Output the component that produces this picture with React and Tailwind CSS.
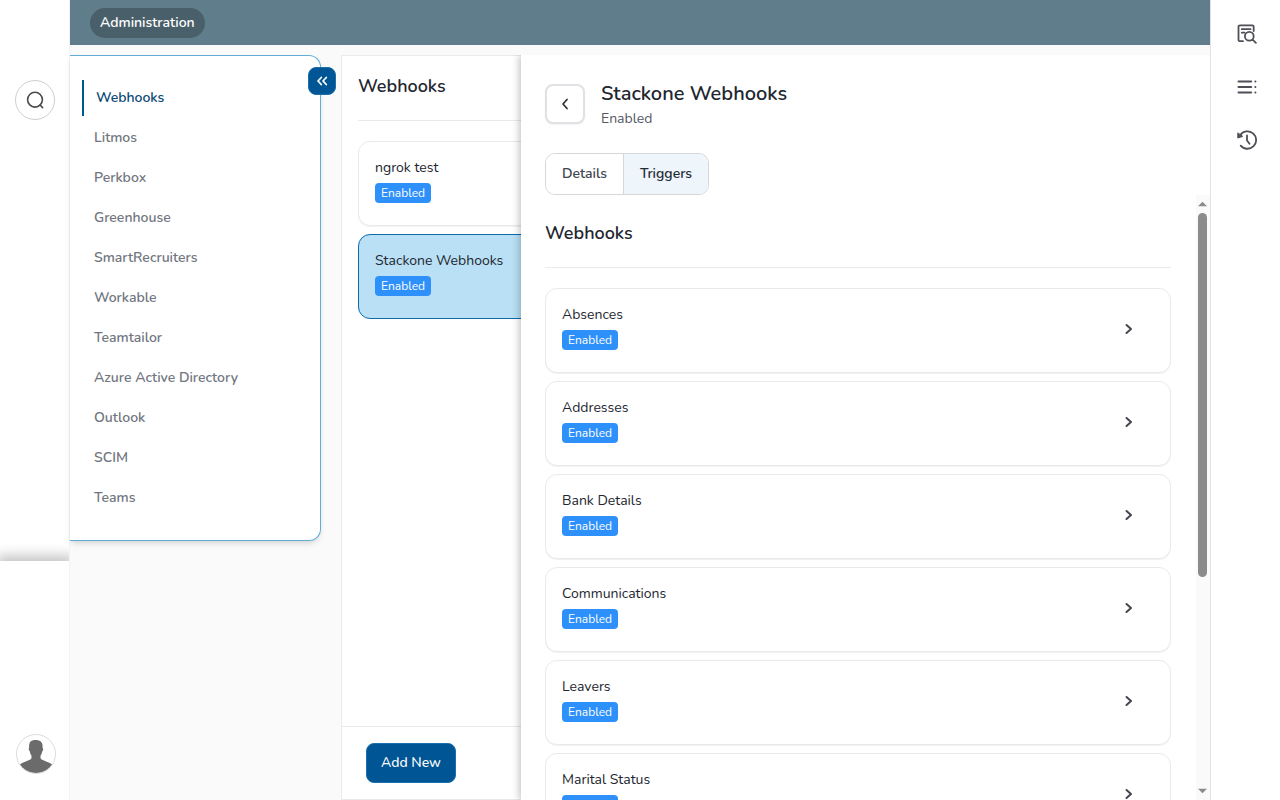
import React, { useState } from "react";

const menuItems = [
  "Webhooks",
  "Litmos",
  "Perkbox",
  "Greenhouse",
  "SmartRecruiters",
  "Workable",
  "Teamtailor",
  "Azure Active Directory",
  "Outlook",
  "SCIM",
  "Teams",
];

const hooks = ["ngrok test", "Stackone Webhooks"];

const triggers = [
  "Absences",
  "Addresses",
  "Bank Details",
  "Communications",
  "Leavers",
  "Marital Status",
];

const Badge = () => (
  <span className="inline-block h-5 rounded bg-[#2e90fa] px-1.5 text-xs leading-5 text-white">
    Enabled
  </span>
);

const SearchIcon = () => (
  <svg width="20" height="20" viewBox="0 0 20 20" fill="none" stroke="#4b4b4f" strokeWidth="1.6" strokeLinecap="round">
    <circle cx="10" cy="9.7" r="7.4" />
    <path d="M15 15l2.600 2.600" />
  </svg>
);

const Avatar = () => (
  <svg width="40" height="40" viewBox="0 0 40 40">
    <defs>
      <clipPath id="avatarClip">
        <circle cx="20" cy="20" r="19" />
      </clipPath>
    </defs>
    <circle cx="20" cy="20" r="19.5" fill="#fff" stroke="#dcdcdc" />
    <path
      clipPath="url(#avatarClip)"
      fill="#6b6b6b"
      d="M13.200 13.500C12.600 8.500 15 6 19 6c5 0 8.200 1.800 7.500 7.800.9.300.8 2.800-.3 3.700-.3 2-1 3.300-1.700 4.300v2.200c0 2 7.500 3.600 11.500 6.300V40H4v-9.700c4-2.700 11.500-4.300 11.500-6.300v-2.200c-.9-1-1.400-2.500-1.600-4.200-1.200-.9-1.500-3.500-.7-4.100z"
    />
  </svg>
);

// document with a magnifier on its lower right corner
const AuditIcon = () => (
  <svg width="20" height="20" viewBox="0 0 20 20" fill="none" stroke="#4f4f57" strokeWidth="1.800" strokeLinecap="round" strokeLinejoin="round">
    <path d="M6 17.200H3a1.500 1.500 0 0 1-1.500-1.500V2.800A1.500 1.500 0 0 1 3 1.300h12.200a1.500 1.500 0 0 1 1.500 1.500V7" />
    <path d="M4.800 5.200h8.700M4.800 8.700h2.700" />
    <circle cx="12.300" cy="12.300" r="4.400" />
    <path d="M15.600 15.600l3.300 3.200" />
  </svg>
);

const ListIcon = () => (
  <svg width="20" height="20" viewBox="0 0 20 20" fill="none" stroke="#4f4f57" strokeWidth="2" strokeLinecap="round">
    <path d="M1.500 4.500h12.700M1.500 10h12.700M1.500 15.500h12.700M18.300 4.500h.1M18.300 10h.1M18.300 15.500h.1" />
  </svg>
);

const HistoryIcon = () => (
  <svg width="20" height="20" viewBox="0 0 20 20" fill="none" stroke="#4f4f57" strokeWidth="1.800" strokeLinecap="round" strokeLinejoin="round">
    <path d="M3.200 5.200A8.700 8.700 0 1 1 3.700 15.600" />
    <path d="M10 5.500v5l2.500 3.300" />
    <path d="M.8 3.200v4.800l4.600-1.500z" fill="#4f4f57" strokeWidth="1" />
  </svg>
);

const CardRow = ({ name, selected, chevron, onClick }) => (
  <li>
    <button
      type="button"
      onClick={onClick}
      className={
        selected
          ? "flex h-[85px] w-full items-center justify-between rounded-xl border border-[#0e6cab] bg-[#b9e0f5] pl-4 pr-9 text-left"
          : "flex h-[85px] w-full items-center justify-between rounded-xl border border-[#e9eaeb] bg-white pl-4 pr-9 text-left shadow-2xs"
      }
    >
      <span className="mb-[9px] flex flex-col items-start gap-[3px]">
        <span className="text-sm leading-6 text-[#22262f]">{name}</span>
        <Badge />
      </span>
      {chevron && (
        <svg className="mb-1" width="10" height="12" viewBox="0 0 10 12" fill="none" stroke="#45464e" strokeWidth="2" strokeLinecap="round" strokeLinejoin="round">
          <path d="M2.500 2L7 6L2.500 10" />
        </svg>
      )}
    </button>
  </li>
);

const App = () => {
  const [active, setActive] = useState("Webhooks");
  const [hook, setHook] = useState("Stackone Webhooks");
  const [tab, setTab] = useState("Triggers");

  return (
    <div className="flex h-screen overflow-hidden bg-[#fafafa] font-['Nunito','Lato',sans-serif] text-[#22262f]">
      {/* left rail */}
      <aside className="flex w-[70px] shrink-0 flex-col border-r border-[#f3f3f3] bg-white">
        <div className="flex h-[561px] flex-col items-center overflow-hidden pt-20">
          <button
            type="button"
            aria-label="Search"
            className="flex h-10 w-10 items-center justify-center rounded-full border border-[#cfcfcf] bg-white"
          >
            <SearchIcon />
          </button>
          <div className="mt-auto -mb-1 h-1 w-[70px] shadow-[0_0_14px_4px_rgba(0,0,0,0.3)]" />
        </div>
        <button type="button" aria-label="Profile" className="mt-auto mb-[26px] ml-4 h-10 w-10">
          <Avatar />
        </button>
      </aside>

      <div className="flex min-w-0 flex-1 flex-col">
        <header className="flex h-[45px] shrink-0 items-center bg-[#607d8b] px-5">
          <a href="#" className="h-[30px] rounded-full bg-[#495f69] px-[10px] text-sm leading-[29px] font-semibold text-white">
            Administration
          </a>
        </header>

        <div className="flex min-h-0 flex-1 pt-[10px]">
          {/* settings menu */}
          <nav className="relative h-[486px] w-[251px] shrink-0 rounded-r-xl border border-l-0 border-[#62add6] bg-white pt-6 pl-3 shadow-md">
            <ul className="flex flex-col gap-1">
              {menuItems.map((item) => (
                <li key={item}>
                  <a
                    href="#"
                    onClick={() => setActive(item)}
                    className={
                      item === active
                        ? "block h-9 border-l-2 border-[#00568f] pl-3 text-sm leading-9 font-semibold text-[#0b4a76]"
                        : "block h-9 pl-3 text-sm leading-9 font-semibold text-[#717680]"
                    }
                  >
                    {item}
                  </a>
                </li>
              ))}
            </ul>
            <button
              type="button"
              aria-label="Collapse menu"
              className="absolute top-[11px] -right-4 flex h-7 w-7 items-center justify-center rounded-lg border border-[#1b6fad] bg-[#005594]"
            >
              <svg width="12" height="12" viewBox="0 0 12 12" fill="none" stroke="#fff" strokeWidth="1.800" strokeLinecap="round" strokeLinejoin="round">
                <path d="M5.300 2.500L2 6l3.300 3.500M10.300 2.500L7 6l3.300 3.500" />
              </svg>
            </button>
          </nav>

          {/* webhook list, continues under the drawer */}
          <section className="ml-5 flex w-[180px] shrink-0 flex-col overflow-hidden border border-r-0 border-[#e9eaeb] bg-white">
            <div className="w-[420px] flex-1 px-4">
              <h2 className="h-[65px] border-b border-[#e9eaeb] text-lg leading-[60px] font-semibold">Webhooks</h2>
              <ul className="mt-5 flex flex-col gap-2">
                {hooks.map((name) => (
                  <CardRow key={name} name={name} selected={name === hook} onClick={() => setHook(name)} />
                ))}
              </ul>
            </div>
            <div className="h-[73px] border-t border-[#e9eaeb] px-6 py-4">
              <button
                type="button"
                className="h-10 w-[90px] rounded-lg border border-[#1b6fad] bg-[#005594] text-sm font-medium whitespace-nowrap text-white"
              >
                Add New
              </button>
            </div>
          </section>

          {/* drawer */}
          <main className="z-10 flex min-w-0 flex-1 flex-col bg-white shadow-[-1px_0_8px_rgba(0,0,0,0.28)] [clip-path:inset(0_0_0_-12px)]">
            <div className="flex gap-4 px-6 pt-[25px]">
              <button
                type="button"
                aria-label="Back"
                className="mt-1 flex h-10 w-10 items-center justify-center rounded-lg border-2 border-[#e0e1e4] bg-white shadow-xs"
              >
                <svg width="12" height="14" viewBox="0 0 12 14" fill="none" stroke="#33343b" strokeWidth="1.800" strokeLinecap="round" strokeLinejoin="round">
                  <path d="M8 2.500L4 7L8 11.500" />
                </svg>
              </button>
              <div>
                <h1 className="text-xl leading-7 font-semibold">{hook}</h1>
                <p className="text-sm leading-[22px] text-[#535862]">Enabled</p>
              </div>
            </div>

            <div className="mt-[23px] ml-6 flex h-[42px] shrink-0 self-start overflow-hidden rounded-[10px] border border-[#d5d7da]">
              {["Details", "Triggers"].map((name) => (
                <button
                  key={name}
                  type="button"
                  onClick={() => setTab(name)}
                  className={
                    name === tab
                      ? "w-[84px] bg-[#eef6fc] text-sm font-semibold text-[#252b37]"
                      : "w-[78px] border-r border-[#d5d7da] bg-white text-sm font-semibold text-[#414651]"
                  }
                >
                  {name}
                </button>
              ))}
            </div>

            <div className="flex min-h-0 flex-1">
              <div className="min-w-0 flex-1 overflow-y-auto pr-[25px] pb-6 pl-6 [scrollbar-width:none]">
                <h2 className="h-[73px] border-b border-[#e9eaeb] pt-6 text-lg leading-7 font-semibold">Webhooks</h2>
                <ul className="mt-5 flex flex-col gap-2">
                  {triggers.map((name) => (
                    <CardRow key={name} name={name} chevron />
                  ))}
                </ul>
              </div>
              <div className="flex w-[14px] flex-col items-center bg-[#fafafa] py-[6px] pr-px" aria-hidden="true">
                <svg width="9" height="6" viewBox="0 0 10 6" fill="#8b8b8b">
                  <path d="M0 5.500L5 .5l5 5z" />
                </svg>
                <div className="mt-[6px] h-[364px] w-[9px] rounded-full bg-[#8b8b8b]" />
                <svg className="mt-auto" width="9" height="6" viewBox="0 0 10 6" fill="#8b8b8b">
                  <path d="M0 .5l5 5 5-5z" />
                </svg>
              </div>
            </div>
          </main>
        </div>
      </div>

      {/* right rail */}
      <aside className="z-20 flex w-[70px] shrink-0 flex-col items-center gap-[33px] border-l border-[#e3e3e6] bg-white pt-6 pl-[3px]">
        <button type="button" aria-label="Audit">
          <AuditIcon />
        </button>
        <button type="button" aria-label="Tasks">
          <ListIcon />
        </button>
        <button type="button" aria-label="History">
          <HistoryIcon />
        </button>
      </aside>
    </div>
  );
};

export default App;
